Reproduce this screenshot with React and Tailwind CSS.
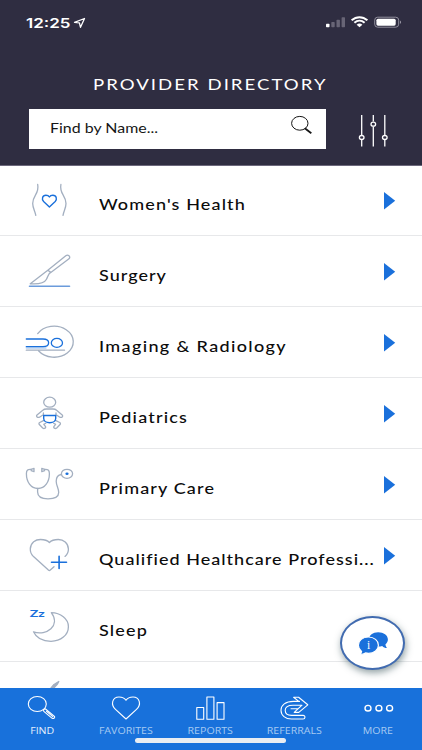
const GRAY = "#a3afc0";
const BLUE = "#1a70db";

const categories = [
  { name: "Women's Health", icon: WomensHealthIcon, tracking: "tracking-[0.95px]" },
  { name: "Surgery", icon: SurgeryIcon, tracking: "tracking-[0.85px]" },
  { name: "Imaging & Radiology", icon: ImagingIcon, tracking: "tracking-[1.13px]" },
  { name: "Pediatrics", icon: PediatricsIcon, tracking: "tracking-[0.98px]" },
  { name: "Primary Care", icon: StethoscopeIcon, tracking: "tracking-[0.95px]" },
  { name: "Qualified Healthcare Professi...", icon: HeartPlusIcon, tracking: "tracking-[0.85px]" },
  { name: "Sleep", icon: SleepIcon, tracking: "tracking-[0.98px]" }
];

const tabs = [
  { label: "FIND", icon: FindIcon, active: true },
  { label: "FAVORITES", icon: FavoritesIcon },
  { label: "REPORTS", icon: ReportsIcon },
  { label: "REFERRALS", icon: ReferralsIcon },
  { label: "MORE", icon: MoreIcon }
];

function RowIcon({ children }) {
  return (
    <svg width="80" height="70" viewBox="0 0 80 70" fill="none" stroke={GRAY} strokeWidth="1.3" strokeLinecap="round" strokeLinejoin="round" className="shrink-0">
      {children}
    </svg>
  );
}

function WomensHealthIcon() {
  return (
    <RowIcon>
      <path d="M37.7 19.5C39.5 29 32.7 30 32.7 38.5C32.7 43 35 46 35.8 50.3M60.9 19.5C59.1 29 66 30 66 38.5C66 43 63.8 46 63 50.3" />
      <path d="M49.4 42L43.6 36.6C41.5 34.4 42.2 30.2 45.9 30.2C47.8 30.2 48.9 31.1 49.4 32C49.9 31.1 51 30.2 52.9 30.2C56.6 30.2 57.3 34.4 55.2 36.6Z" stroke={BLUE} strokeWidth="1.4" />
    </RowIcon>
  );
}

function SurgeryIcon() {
  return (
    <RowIcon>
      <path d="M30.3 47.8L47.8 34.3L65.8 19.8C68 18.2 71 20.4 69 22.8L50.8 36.4L47.8 34.3M50.8 36.4C48.3 37.5 48 40.5 46.3 43.5C44.2 47.5 38 48.3 30.3 47.8" />
      <path d="M29.5 50.2H69.5" stroke="#6b9bdb" strokeWidth="1.6" />
    </RowIcon>
  );
}

function ImagingIcon() {
  return (
    <RowIcon>
      <path d="M37.7 26.6A19.2 15.5 0 1 1 38.5 43.8" />
      <path d="M26.3 43.2H64.5" />
      <path d="M26.3 41H46" stroke="#b7d1f2" />
      <path d="M26.3 32H43C50.5 32 50.5 39.7 43 39.7H26.3" stroke={BLUE} strokeWidth="1.3" />
      <ellipse cx="56.9" cy="35.9" rx="5.6" ry="4.5" stroke={BLUE} strokeWidth="1.3" />
    </RowIcon>
  );
}

function PediatricsIcon() {
  return (
    <RowIcon>
      <ellipse cx="49.7" cy="24.2" rx="6" ry="5" />
      <path d="M42.5 37.3L39.5 39.2C37.6 40 35.7 38.4 37 37L42.8 32.3C43.9 31.2 45 31 46.5 31H52.9C54.4 31 55.5 31.2 56.6 32.3L62.2 37C63.5 38.4 61.7 40 59.8 39.2L56.9 37.3M43.4 35V37M56 35V37" />
      <path d="M43.4 42.6L39.7 44.5C38.4 45.3 39 46.2 39.8 47L42.7 50C44.2 51.2 46.5 49.8 45.4 48.4L43.8 46.3L45.8 45.2M56 42.6L59.7 44.5C61 45.3 60.4 46.2 59.6 47L56.7 50C55.2 51.2 52.9 49.8 54 48.4L55.6 46.3L53.6 45.2" />
      <path d="M43.7 37.5H55.7V40.5C55.7 43 53 44.7 49.7 44.7C46.4 44.7 43.7 43 43.7 40.5Z" stroke={BLUE} strokeWidth="1.4" />
    </RowIcon>
  );
}

function StethoscopeIcon() {
  return (
    <RowIcon>
      <path d="M31.2 20.4C28 20 26.4 21.3 26.4 24.5C26.4 33 30.8 39.5 37.9 39.5C45 39.5 49.4 33 49.4 24.5C49.4 21.3 47.8 20 44.6 20.4" />
      <path d="M31.2 20.3L34 19.3V22.7L31.2 21.7ZM44.6 20.3L41.8 19.3V22.7L44.6 21.7Z" />
      <path d="M37.6 39.5V43C37.6 48 42 49.8 48 49.8C54 49.8 58.7 48.4 58.7 43.5C58.7 39 56.2 36.5 56.2 32.3C56.2 28.3 57.5 26 61.4 25.5" />
      <ellipse cx="67" cy="24.8" rx="5.6" ry="4.5" />
      <ellipse cx="67" cy="24.8" rx="1.6" ry="1.3" fill={BLUE} stroke="none" />
    </RowIcon>
  );
}

function HeartPlusIcon() {
  return (
    <RowIcon>
      <path d="M54 46.8L50.3 50.1C49.7 50.6 49 50.6 48.4 50.1L33.5 36.6C30.8 34 30.2 31.3 30.3 28.9C30.7 22.5 35.5 19.5 40.5 19.5C44.5 19.5 47.5 20.5 49.4 22.5C51.3 20.5 54.3 19.5 58.3 19.5C63.5 19.5 68.2 23 68.4 28.9C68.5 31.8 67.3 34.3 65 36.4" />
      <path d="M51.5 42.3H66.5M59.1 36.3V48.5" stroke={BLUE} strokeWidth="1.6" />
    </RowIcon>
  );
}

function SleepIcon() {
  return (
    <RowIcon>
      <path d="M51.3 21.7C60.5 22 68.4 27.8 68.4 35.7C68.4 44 60.8 50.3 51 50.3C42.8 50.3 36.2 46.7 33.5 40.8C46.5 45.3 61 34.5 51.3 21.7Z" />
      <text x="29.8" y="26.4" fill={BLUE} stroke="none" fontFamily="Lato, sans-serif" fontWeight="700" fontSize="9.8" textLength="15" lengthAdjust="spacingAndGlyphs">Zz</text>
    </RowIcon>
  );
}

function TabIcon({ viewBox, children }) {
  return (
    <svg width="44" height="34" viewBox={viewBox} fill="none" stroke="white" strokeWidth="1.1" strokeLinejoin="round" strokeLinecap="round">
      {children}
    </svg>
  );
}

function FindIcon() {
  return (
    <TabIcon viewBox="20 0 44 34">
      <ellipse cx="37.3" cy="16" rx="9" ry="7.5" />
      <path d="M43.3 21.7L45.2 20.8L54.5 28.4C55.2 29.5 53.8 31 52.2 30.3L43.8 23.3ZM46.5 23.3L52.8 28.7" />
    </TabIcon>
  );
}

function FavoritesIcon() {
  return (
    <TabIcon viewBox="104 0 44 34">
      <path d="M126 31L115.5 21.3C110.3 16.5 112.3 9 119 9C122.3 9 124.8 10.4 126 12.3C127.2 10.4 129.7 9 133 9C139.7 9 141.7 16.5 136.5 21.3Z" />
    </TabIcon>
  );
}

function ReportsIcon() {
  return (
    <TabIcon viewBox="188 0 44 34">
      <path d="M196.8 19.5H203.7V31.3H196.8ZM206.9 9H213.9V31.3H206.9ZM217.1 14.6H224V31.3H217.1Z" />
    </TabIcon>
  );
}

function ReferralsIcon() {
  return (
    <TabIcon viewBox="272 0 44 34">
      <path d="M299.5 13.4H293.5C285.5 13.4 281 17.2 281 22.2C281 27.4 285.4 31 291.5 31H303C305.6 31 305.6 27.4 303 27.4H291.5C287.5 27.4 285.2 25.4 285.2 22.3C285.2 19.2 288.2 17.2 293 17.2H302L294.2 24.4H298.8L307.8 16.8L298.6 9.3H293.6L298.8 13.4M291 20.8H297.5" />
    </TabIcon>
  );
}

function MoreIcon() {
  return (
    <TabIcon viewBox="356 0 44 34">
      <g strokeWidth="1.4">
        <ellipse cx="368" cy="20.2" rx="3" ry="2.8" />
        <ellipse cx="378.9" cy="20.2" rx="3" ry="2.8" />
        <ellipse cx="389.6" cy="20.2" rx="3" ry="2.8" />
      </g>
    </TabIcon>
  );
}

function StatusBar() {
  return (
    <div className="flex h-[44px] items-start justify-between pl-[26px] pr-[20px] pt-[12px] text-white">
      <div className="flex items-center">
        <span className="w-[47px] pt-px font-[Inter] text-[13.5px] leading-5 font-semibold whitespace-nowrap">
          <span className="inline-block origin-left scale-x-[1.26]">12:25</span>
        </span>
        <svg width="13" height="12" viewBox="0 0 13 12" fill="none" stroke="white" strokeWidth="1.3" strokeLinejoin="round">
          <path d="M1.5 5.3L11.5 1.5L7.5 10.3L6.4 5.8Z" />
        </svg>
      </div>
      <svg width="78" height="16" viewBox="324 14 78 16" className="mt-[2px]">
        <g fill="#686576">
          <rect x="331.3" y="22" width="3.4" height="5.3" rx="0.7" />
          <rect x="336.5" y="19.7" width="3.4" height="7.6" rx="0.7" />
          <rect x="341.6" y="17.2" width="3.4" height="10.1" rx="0.7" />
        </g>
        <rect x="326" y="23.8" width="3.5" height="3.5" rx="0.7" fill="white" />
        <g fill="none" stroke="white" strokeWidth="2">
          <path d="M351.6 20.3C356.4 16.1 362.6 16.1 367.4 20.3" />
          <path d="M354.4 22.8C357.4 20.1 361.6 20.1 364.6 22.8" />
        </g>
        <path d="M356.6 24.7C358.4 23.1 360.6 23.1 362.4 24.7L359.5 27.3Z" fill="white" />
        <rect x="374.7" y="17.2" width="24" height="10" rx="3" fill="none" stroke="#9b99a6" strokeWidth="0.9" />
        <rect x="376.4" y="18.7" width="19.3" height="7" rx="1.6" fill="white" />
        <path d="M400 20.6C401.4 21.3 401.4 23.2 400 23.9Z" fill="#9b99a6" />
      </svg>
    </div>
  );
}

function Header() {
  return (
    <header className="relative z-10 h-[165px] shrink-0 bg-[#2f2d41] shadow-[0_1px_0_#6c687c]">
      <StatusBar />
      <h1 className="mt-[29px] pl-[93px] text-[16px] leading-[22px] whitespace-nowrap text-white">
        <span className="inline-block origin-left scale-x-[1.16] tracking-[1.76px]">PROVIDER DIRECTORY</span>
      </h1>
      <div className="mt-[14px] flex items-start pl-[29px]">
        <div className="flex h-[40px] w-[297px] justify-between bg-white pl-[21px] pr-[12px] text-[13.5px] leading-[39px] text-[#161616]">
          <span className="inline-block origin-left scale-x-[1.18] whitespace-nowrap">Find by Name...</span>
          <svg width="24" height="22" viewBox="290 114 24 22" fill="none" stroke="#161616" className="mt-[5px]">
            <ellipse cx="299.8" cy="123.3" rx="8.2" ry="6.9" strokeWidth="1" />
            <path d="M304.8 128.2L311.3 133.3" strokeWidth="1.8" />
          </svg>
        </div>
        <svg width="32" height="34" viewBox="357 114 32 34" fill="none" stroke="white" strokeWidth="1.3" className="mt-[5px] ml-[31px]">
          <path d="M361.7 115V135M361.7 140V146.5M373.3 115V121.5M373.3 126.5V146.5M384.8 115V135M384.8 140V146.5" />
          <ellipse cx="361.7" cy="137.5" rx="2.3" ry="2" />
          <ellipse cx="373.3" cy="124.2" rx="2.3" ry="2" />
          <ellipse cx="384.8" cy="137.5" rx="2.3" ry="2" />
        </svg>
      </div>
    </header>
  );
}

function CategoryRow({ name, icon: Icon, tracking }) {
  return (
    <li className="flex h-[71px] shrink-0 items-start border-b border-[#e7e8ea]">
      <Icon />
      <span className="mt-[28px] ml-[18.5px] w-[285.5px] text-[15px] leading-[22px] font-medium whitespace-nowrap text-[#0c0c0c]">
        <span className={`inline-block origin-left scale-x-[1.2] ${tracking}`}>{name}</span>
      </span>
      <svg width="12" height="18" viewBox="0 0 12 18" className="mt-[27px] shrink-0">
        <path d="M0 0L11.2 8.7L0 17.4Z" fill={BLUE} />
      </svg>
    </li>
  );
}

function ChatButton() {
  return (
    <button className="absolute top-[616px] left-[340px] z-20 flex h-[54px] w-[65px] items-center justify-center rounded-[50%] border-2 border-[#416bb0] bg-white shadow-[1px_3px_7px_rgba(40,70,75,0.5)]">
      <svg width="32" height="26" viewBox="356 630 32 26" fill={BLUE}>
        <path d="M377.2 632.2C371.8 632.2 368 635.3 368 639.3C368 643.4 371.8 646.5 377.2 646.5C378.7 646.5 380 646.4 381.2 646C382.5 647.4 384 648 385.9 648C385 646.8 384.6 645.7 384.4 644.4C386.1 643.1 386.9 641.4 386.9 639.3C386.9 635.3 382.6 632.2 377.2 632.2Z" />
        <path d="M367.4 637C361.5 637 357.4 640.7 357.4 645.2C357.4 647.9 358.7 650 360.6 651.4C360.4 652.6 359.8 653.5 358.9 654.5C361.2 654.5 363.2 653.9 364.5 652.9C365.5 653.2 366.4 653.4 367.4 653.4C373.2 653.4 377.4 649.8 377.4 645.2C377.4 640.7 373.2 637 367.4 637Z" stroke="white" strokeWidth="1.2" />
        <text x="367.7" y="649.3" textAnchor="middle" fontFamily="Liberation Serif, serif" fontSize="11.5" fill="white">i</text>
      </svg>
    </button>
  );
}

function TabBar() {
  return (
    <nav className="relative z-10 flex h-[62px] shrink-0 bg-[#1871db] pr-[2px] font-['Open_Sans']">
      {tabs.map(({ label, icon: Icon, active }) => (
        <button key={label} className="flex w-[84px] flex-col items-center">
          <Icon />
          <span className={`mt-[3px] inline-block scale-x-[1.18] text-[9px] leading-3 whitespace-nowrap ${active ? "text-[#e3effc]" : "text-[#a6caf2]"}`}>{label}</span>
        </button>
      ))}
      <div className="absolute bottom-[7px] left-[135px] h-[5px] w-[151px] rounded-full bg-[#e9edf2]" />
    </nav>
  );
}

export default function App() {
  return (
    <div className="relative flex h-[750px] w-[422px] flex-col overflow-hidden bg-white font-[Lato,sans-serif]">
      <Header />
      <ul className="flex min-h-0 flex-1 flex-col overflow-hidden">
        {categories.map((item) => (
          <CategoryRow key={item.name} {...item} />
        ))}
        <li className="flex h-[71px] shrink-0">
          <RowIcon>
            <path d="M51 26L54 22.5L58.8 19.5L57.5 22L54 25.8Z" fill={GRAY} />
          </RowIcon>
        </li>
      </ul>
      <ChatButton />
      <TabBar />
    </div>
  );
}
